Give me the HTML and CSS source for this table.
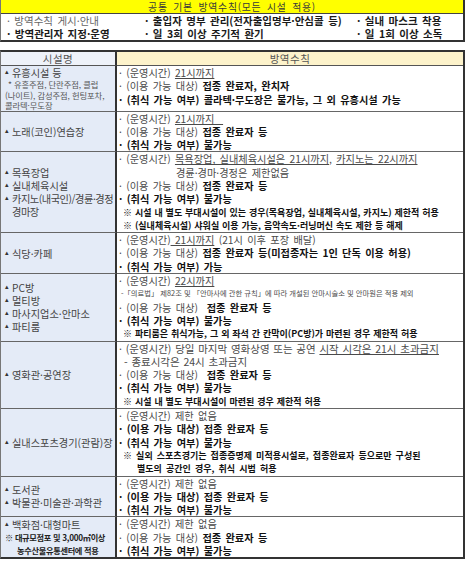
FILE: index.html
```html
<!DOCTYPE html>
<html lang="ko">
<head>
<meta charset="utf-8">
<link rel="stylesheet" href="styles.css">
</head>
<body>
<div class="page">
  <div class="notice">
    <div class="banner">공통 기본 방역수칙(모든 시설 적용)</div>
    <div class="rules">
      <span class="r n">· 방역수칙 게시·안내</span>
      <span class="r b">· 출입자 명부 관리(전자출입명부·안심콜 등)</span>
      <span class="r b">· 실내 마스크 착용</span>
      <span class="r b">· 방역관리자 지정·운영</span>
      <span class="r b">· 일 3회 이상 주기적 환기</span>
      <span class="r b">· 일 1회 이상 소독</span>
    </div>
  </div>

  <div class="table">
    <div class="hd hd-l">시설명</div>
    <div class="hd hd-r">방역수칙</div>

    <!-- row 1 -->
    <div class="fac fac-top">
      <div class="item"><span class="tri">▴</span><span>유흥시설 등</span></div>
      <div class="sub sub1">* 유흥주점, 단란주점, 클럽</div>
      <div class="sub">(나이트), 감성주점, 헌팅포차,</div>
      <div class="sub">콜라텍·무도장</div>
    </div>
    <div class="rule">
      <div class="ln">· (운영시간) <u>21시까지</u></div>
      <div class="ln">· (이용 가능 대상) <b>접종 완료자, 완치자</b></div>
      <div class="ln bd">· (취식 가능 여부) 콜라텍·무도장은 불가능, 그 외 유흥시설 가능</div>
    </div>

    <!-- row 2 -->
    <div class="fac">
      <div class="item"><span class="tri">▴</span><span>노래(코인)연습장</span></div>
    </div>
    <div class="rule">
      <div class="ln">· (운영시간) <u>21시까지&nbsp;&nbsp;</u></div>
      <div class="ln">· (이용 가능 대상) <b>접종 완료자 등</b></div>
      <div class="ln bd">· (취식 가능 여부) 불가능</div>
    </div>

    <!-- row 3 -->
    <div class="fac">
      <div class="item"><span class="tri">▴</span><span>목욕장업</span></div>
      <div class="item"><span class="tri">▴</span><span>실내체육시설</span></div>
      <div class="item"><span class="tri">▴</span><span class="tight">카지노(내국인)/경륜·경정<br>경마장</span></div>
    </div>
    <div class="rule">
      <div class="ln">· (운영시간) <u>목욕장업, 실내체육시설은 21시까지</u>, <u>카지노는 22시까지</u></div>
      <div class="ln ind-wide">경륜·경마·경정은 제한없음</div>
      <div class="ln">· (이용 가능 대상) <b>접종 완료자 등</b></div>
      <div class="ln bd">· (취식 가능 여부) 불가능</div>
      <div class="ln nt">※ 시설 내 별도 부대시설이 있는 경우(목욕장업, 실내체육시설, 카지노) 제한적 허용</div>
      <div class="ln nt">※ (실내체육시설) 샤워실 이용 가능, 음악속도·러닝머신 속도 제한 등 해제</div>
    </div>

    <!-- row 4 -->
    <div class="fac">
      <div class="item"><span class="tri">▴</span><span>식당·카페</span></div>
    </div>
    <div class="rule">
      <div class="ln">· (운영시간)<u> 21시까지</u> (21시 이후 포장 배달)</div>
      <div class="ln">· (이용 가능 대상) <b>접종 완료자 등(미접종자는 1인 단독 이용 허용)</b></div>
      <div class="ln bd">· (취식 가능 여부) 가능</div>
    </div>

    <!-- row 5 -->
    <div class="fac">
      <div class="item"><span class="tri">▴</span><span>PC방</span></div>
      <div class="item"><span class="tri">▴</span><span>멀티방</span></div>
      <div class="item"><span class="tri">▴</span><span>마사지업소·안마소</span></div>
      <div class="item"><span class="tri">▴</span><span>파티룸</span></div>
    </div>
    <div class="rule">
      <div class="ln">· (운영시간) <u>22시까지</u></div>
      <div class="ln sm">-「의료법」 제82조 및 「안마사에 관한 규칙」에 따라 개설된 안마시술소 및 안마원은 적용 제외</div>
      <div class="ln">· (이용 가능 대상) &nbsp;<b>접종 완료자 등</b></div>
      <div class="ln bd">· (취식 가능 여부) 불가능</div>
      <div class="ln nt">※ 파티룸은 취식가능, 그 외 좌석 간 칸막이(PC방)가 마련된 경우 제한적 허용</div>
    </div>

    <!-- row 6 -->
    <div class="fac">
      <div class="item"><span class="tri">▴</span><span>영화관·공연장</span></div>
    </div>
    <div class="rule">
      <div class="ln lg">· (운영시간) 당일 마지막 영화상영 또는 공연 <u>시작 시각은 21시 초과금지</u></div>
      <div class="ln lg ind-s">- 종료시각은 24시 초과금지</div>
      <div class="ln">· (이용 가능 대상) &nbsp;<b>접종 완료자 등</b></div>
      <div class="ln bd">· (취식 가능 여부) 불가능</div>
      <div class="ln nt">※ 시설 내 별도 부대시설이 마련된 경우 제한적 허용</div>
    </div>

    <!-- row 7 -->
    <div class="fac">
      <div class="item"><span class="tri">▴</span><span>실내스포츠경기(관람)장</span></div>
    </div>
    <div class="rule">
      <div class="ln">· (운영시간) 제한 없음</div>
      <div class="ln bd">· (이용 가능 대상) 접종 완료자 등</div>
      <div class="ln bd">· (취식 가능 여부) 불가능</div>
      <div class="ln nt nt-lg">※ 실외 스포츠경기는 접종증명제 미적용시설로, 접종완료자 등으로만 구성된</div>
      <div class="ln nt nt-lg ind-n">별도의 공간인 경우, 취식 시범 허용</div>
    </div>

    <!-- row 8 -->
    <div class="fac">
      <div class="item"><span class="tri">▴</span><span>도서관</span></div>
      <div class="item"><span class="tri">▴</span><span>박물관·미술관·과학관</span></div>
    </div>
    <div class="rule">
      <div class="ln">· (운영시간) 제한 없음</div>
      <div class="ln bd">· (이용 가능 대상) 접종 완료자 등</div>
      <div class="ln bd">· (취식 가능 여부) 불가능</div>
    </div>

    <!-- row 9 -->
    <div class="fac last">
      <div class="item"><span class="tri">▴</span><span>백화점·대형마트</span></div>
      <div class="note-l">※ 대규모점포 및 3,000㎡이상</div>
      <div class="note-l ind-l">농수산물유통센터에 적용</div>
    </div>
    <div class="rule last">
      <div class="ln">· (운영시간) 제한 없음</div>
      <div class="ln">· (이용 가능 대상) <b>접종 완료자 등</b></div>
      <div class="ln bd">· (취식 가능 여부) 불가능</div>
    </div>
  </div>
</div>
</body>
</html>
```

FILE: styles.css
```css
* {
  box-sizing: border-box;
}

body {
  margin: 0;
  background: #ffffff;
  font-family: "Noto Sans CJK KR", "Noto Sans", sans-serif;
  color: #4a4a4a;
}

.page {
  width: 465px;
}

/* ---- common rules box ---- */
.notice {
  border-left: 1px solid #777;
  border-right: 2px solid #333;
  border-bottom: 2px solid #333;
}

.banner {
  height: 14px;
  background: #ffff00;
  border-bottom: 1px solid #444;
  text-align: center;
  font-size: 9.8px;
  line-height: 14px;
  color: #3a3a3a;
  letter-spacing: 0.8px;
  word-spacing: 2px;
}

.rules {
  display: grid;
  grid-template-columns: 138px 212px 1fr;
  padding: 0 0 0 6px;
}

.r {
  font-size: 10.5px;
  line-height: 13px;
  white-space: nowrap;
  word-spacing: 1.5px;
}

.n {
  color: #666;
}

.b {
  font-weight: 700;
  color: #1a1a1a;
}

/* ---- facility table ---- */
.table {
  margin-top: 8px;
  display: grid;
  grid-template-columns: 116px 1fr;
  border-top: 2px solid #333;
  border-right: 2px solid #333;
  border-bottom: 2px solid #333;
  border-left: 1px solid #777;
}

.hd {
  height: 14px;
  font-size: 10.5px;
  line-height: 13px;
  text-align: center;
  color: #555;
  border-bottom: 1px solid #555;
  letter-spacing: 0.5px;
}

.hd-l {
  background: #eef2f9;
  border-right: 2px solid #333;
}

.hd-r {
  background: #fdf3cb;
}

.fac {
  background: #e4ebf7;
  border-right: 2px solid #333;
  border-bottom: 1px solid #666;
  display: flex;
  flex-direction: column;
  justify-content: center;
  padding-left: 4px;
  font-size: 10.2px;
  color: #444;
  overflow: hidden;
}

.fac-top {
  justify-content: flex-start;
}

.rule {
  border-bottom: 1px solid #666;
  padding-left: 2px;
  overflow: hidden;
}

.last {
  border-bottom: none;
}

.item {
  display: flex;
  line-height: 13px;
  white-space: nowrap;
}

.tri {
  font-family: "DejaVu Sans", sans-serif;
  font-size: 7px;
  width: 7px;
  flex: none;
  color: #333;
  line-height: 13px;
}

.tight {
  letter-spacing: -0.45px;
}

.sub {
  font-size: 8.3px;
  line-height: 10.5px;
  color: #555;
  white-space: nowrap;
  letter-spacing: -0.1px;
}

.sub1 {
  padding-left: 3px;
}

.note-l {
  font-size: 8.2px;
  line-height: 13px;
  font-weight: 700;
  color: #222;
  white-space: nowrap;
  letter-spacing: -0.3px;
}

.ind-l {
  padding-left: 12px;
}

.ln {
  font-size: 10.2px;
  line-height: 13.3px;
  height: 13.3px;
  white-space: nowrap;
  word-spacing: 1.5px;
  color: #4a4a4a;
}

.ln b,
.bd {
  font-weight: 700;
  color: #111;
}

.ln u {
  text-decoration-thickness: 1px;
  text-underline-offset: 1px;
}

.nt {
  font-size: 9px;
  font-weight: 700;
  color: #111;
  word-spacing: 0.4px;
  padding-left: 4px;
}

.nt-lg {
  word-spacing: 1.6px;
}

.sm {
  font-size: 7.3px;
  word-spacing: 0;
  padding-left: 2px;
}

.lg {
  font-size: 10.5px;
  word-spacing: 0.8px;
}

.ind-wide {
  padding-left: 57px;
}

.ind-s {
  padding-left: 5px;
}

.ind-n {
  padding-left: 18px;
}
```
